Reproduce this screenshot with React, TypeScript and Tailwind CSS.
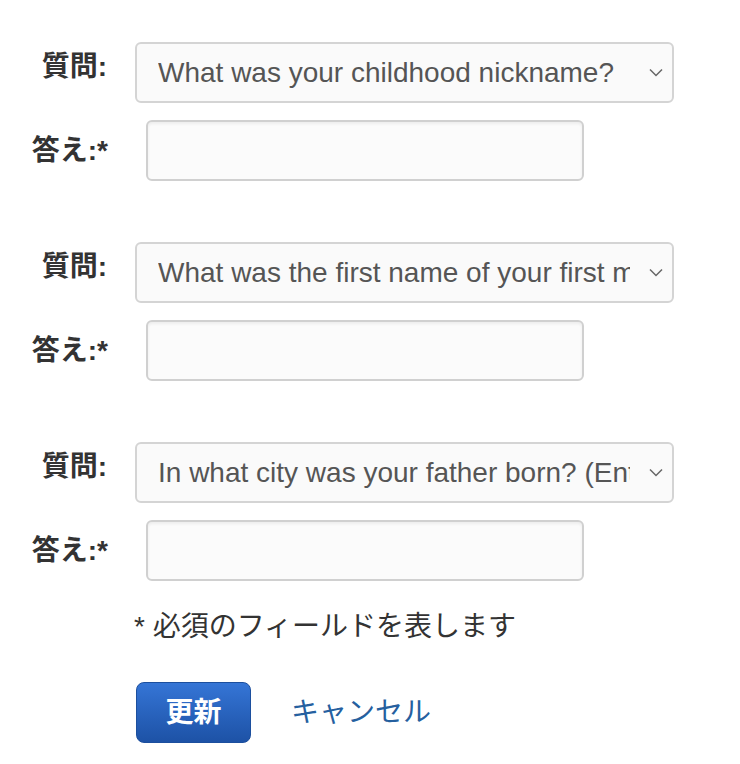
import React from "react";

const questions = [
  "What was your childhood nickname?",
  "What was the first name of your first manager?",
  "In what city was your father born? (Enter full name of city only)",
];

const font = {
  fontFamily: '"Liberation Sans", "Noto Sans CJK JP", sans-serif',
};

function QuestionBlock({ question }: { question: string }) {
  return (
    <div className="flex flex-col gap-[17px]">
      {/* Question row */}
      <div className="flex items-center">
        <label className="w-[108px] pr-[1px] text-right text-[28px] font-bold text-[#333] -mt-[12px] whitespace-nowrap">
          質問:
        </label>
        <div className="relative ml-[27px] w-[539px] h-[61px] rounded-[6px] border-2 border-[#d4d4d4] bg-[#fafafa]">
          <div className="h-full flex items-center pl-[21px]">
            <div className="w-[472px] overflow-hidden whitespace-nowrap text-[28px] text-[#555]">
              {question}
            </div>
          </div>
          <svg
            className="absolute right-[9px] top-[24px]"
            width="14"
            height="9"
            viewBox="0 0 14 9"
            fill="none"
          >
            <path d="M1 1.5L7 7.5L13 1.5" stroke="#666" strokeWidth="1.5" />
          </svg>
        </div>
      </div>

      {/* Answer row */}
      <div className="flex items-center">
        <label className="w-[108px] text-right text-[28px] font-bold text-[#333] whitespace-nowrap">
          答え:*
        </label>
        <input
          type="text"
          className="ml-[38px] w-[438px] h-[61px] rounded-[6px] border-2 border-[#d0d0d0] bg-[#fbfbfb] shadow-[inset_0_2px_3px_rgba(0,0,0,0.06)] outline-none"
        />
      </div>
    </div>
  );
}

export default function App() {
  return (
    <div className="w-[740px] h-[764px] bg-white pt-[42px]" style={font}>
      <div className="flex flex-col gap-[61px]">
        {questions.map((q) => (
          <QuestionBlock key={q} question={q} />
        ))}
      </div>

      <p className="ml-[134px] mt-[28px] text-[28px] leading-[36px] text-[#333]">
        * 必須のフィールドを表します
      </p>

      <div className="flex items-center ml-[136px] mt-[37px] gap-[40px]">
        <button className="w-[115px] h-[61px] rounded-[8px] border border-[#1c4f9e] bg-gradient-to-b from-[#3575d6] to-[#1d52a6] text-white text-[28px] font-bold">
          更新
        </button>
        <a href="#" className="text-[28px] text-[#25609f]">
          キャンセル
        </a>
      </div>
    </div>
  );
}
